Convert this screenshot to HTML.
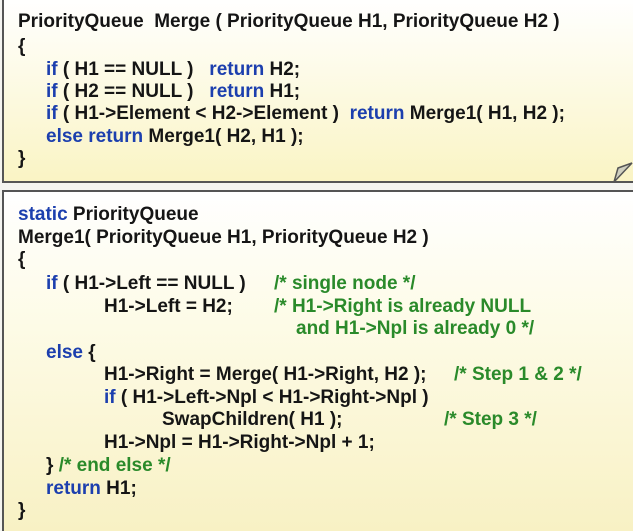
<!DOCTYPE html>
<html style="height:531px;overflow:hidden"><head><style>
body{margin:0;width:633px;height:531px;overflow:hidden;background:#f4f4f0;position:relative;font-family:"Liberation Sans",Arial,sans-serif;font-weight:bold;font-size:19px;}
.box{position:absolute;border:2px solid #555;box-sizing:border-box}
#b1{left:2px;top:-3px;width:640px;height:186px;background:linear-gradient(#fff 0%,#fdfbe8 40%,#faf4c4 100%)}
#b2{left:2px;top:190px;width:640px;height:341px;border-bottom:none;background:linear-gradient(#fff 0%,#fdfbe6 40%,#f8f1c4 100%)}
.l{position:absolute;white-space:pre;color:#151515;letter-spacing:0px;line-height:22px;transform:translateY(-10px)}
.k{color:#1c3fae}.c{color:#2a8a2a}
</style></head><body>
<div class="box" id="b1"></div>
<svg style="position:absolute;left:612px;top:160px" width="21" height="24"><polygon points="2,22 6,8 20,3" fill="#cfcfc0" stroke="#555" stroke-width="1.5"/></svg>
<div class="box" id="b2"></div>
<div class="l" style="left:18px;top:21px">PriorityQueue  Merge ( PriorityQueue H1, PriorityQueue H2 )</div>
<div class="l" style="left:18px;top:46px">{</div>
<div class="l" style="left:46px;top:69px"><span class="k">if</span> ( H1 == NULL )   <span class="k">return</span> H2;</div>
<div class="l" style="left:46px;top:91px"><span class="k">if</span> ( H2 == NULL )   <span class="k">return</span> H1;</div>
<div class="l" style="left:46px;top:113px"><span class="k">if</span> ( H1-&gt;Element &lt; H2-&gt;Element )  <span class="k">return</span> Merge1( H1, H2 );</div>
<div class="l" style="left:46px;top:136px"><span class="k">else return</span> Merge1( H2, H1 );</div>
<div class="l" style="left:18px;top:158px">}</div>

<div class="l k" style="left:18px;top:214px">static <span style="color:#151515">PriorityQueue</span></div>
<div class="l" style="left:18px;top:237px">Merge1( PriorityQueue H1, PriorityQueue H2 )</div>
<div class="l" style="left:18px;top:259px">{</div>
<div class="l" style="left:46px;top:283px"><span class="k">if</span> ( H1-&gt;Left == NULL )</div>
<div class="l c" style="left:274px;top:283px">/* single node */</div>
<div class="l" style="left:104px;top:306px">H1-&gt;Left = H2;</div>
<div class="l c" style="left:274px;top:306px">/* H1-&gt;Right is already NULL</div>
<div class="l c" style="left:296px;top:328px">and H1-&gt;Npl is already 0 */</div>
<div class="l" style="left:46px;top:352px"><span class="k">else</span> {</div>
<div class="l" style="left:104px;top:374px">H1-&gt;Right = Merge( H1-&gt;Right, H2 );</div>
<div class="l c" style="left:454px;top:374px">/* Step 1 &amp; 2 */</div>
<div class="l" style="left:104px;top:397px"><span class="k">if</span> ( H1-&gt;Left-&gt;Npl &lt; H1-&gt;Right-&gt;Npl )</div>
<div class="l" style="left:162px;top:419px">SwapChildren( H1 );</div>
<div class="l c" style="left:444px;top:419px">/* Step 3 */</div>
<div class="l" style="left:104px;top:442px">H1-&gt;Npl = H1-&gt;Right-&gt;Npl + 1;</div>
<div class="l" style="left:46px;top:465px">} <span class="c">/* end else */</span></div>
<div class="l" style="left:46px;top:488px"><span class="k">return</span> H1;</div>
<div class="l" style="left:18px;top:510px">}</div>
</body></html>
